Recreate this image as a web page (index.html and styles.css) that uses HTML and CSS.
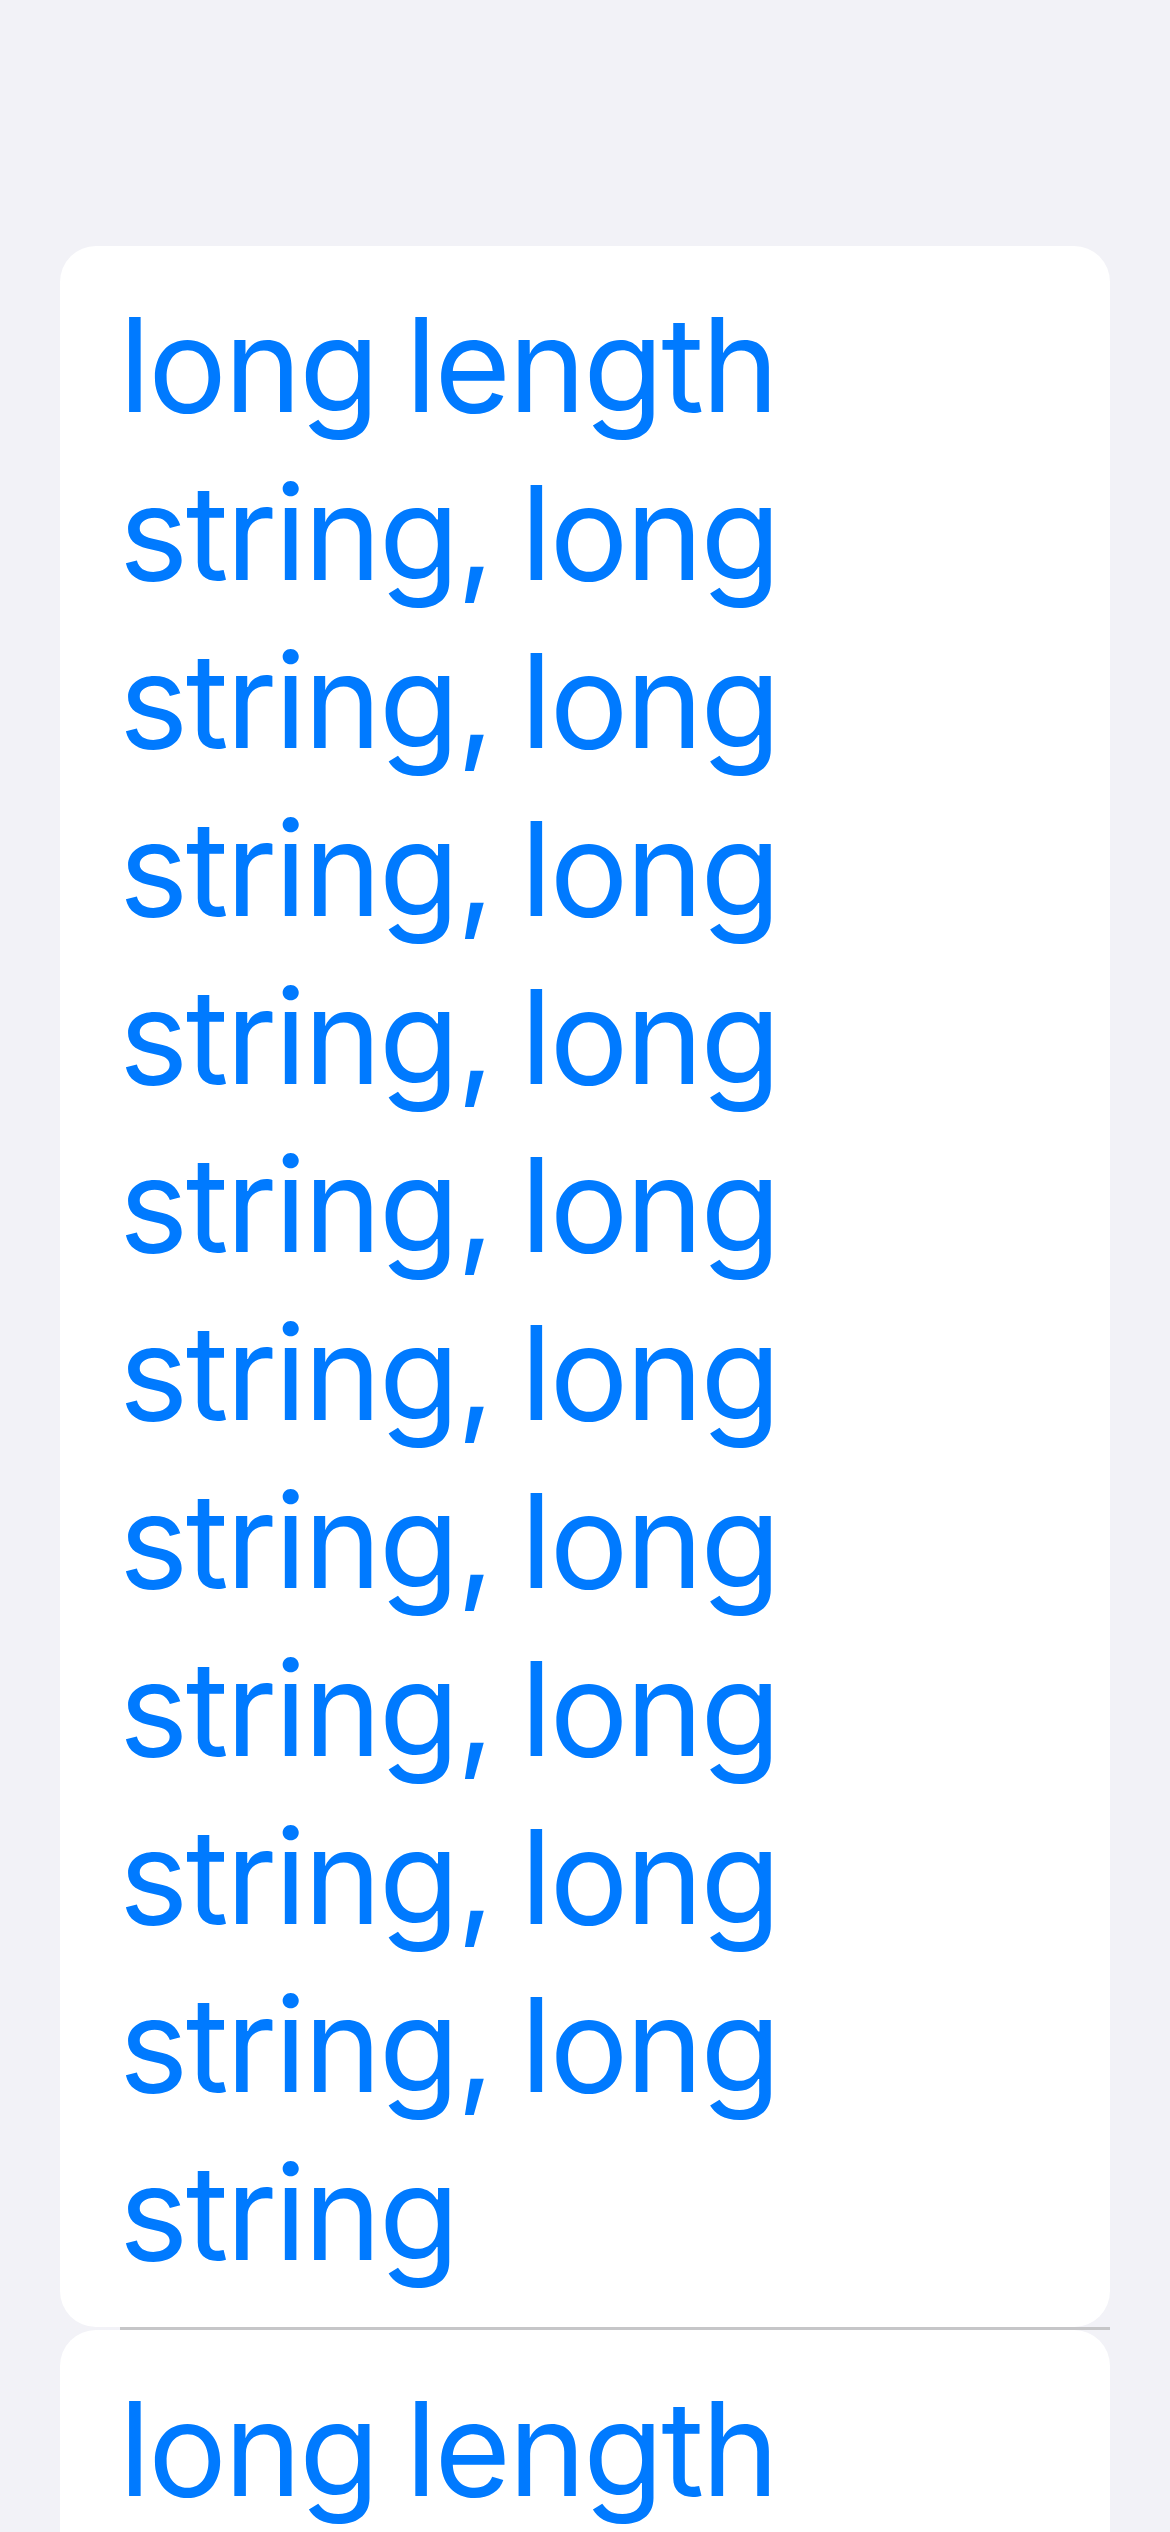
FILE: index.html
```html
<!DOCTYPE html>
<html>
<head>
<meta charset="utf-8">
<link rel="stylesheet" href="styles.css">
</head>
<body>
<main class="page">
  <section class="card card-first">
    <p class="cell-text">long length string, long string, long string, long string, long string, long string, long string, long string, long string, long string, long string</p>
  </section>
  <div class="separator"></div>
  <section class="card card-second">
    <p class="cell-text">long length string, long string, long string, long string</p>
  </section>
</main>
</body>
</html>
```
FILE: styles.css
```css
html, body {
  margin: 0;
  padding: 0;
  background: #f2f2f7;
  height: 2532px;
  overflow: hidden;
}
.page {
  padding-top: 246px;
}
.card {
  background: #ffffff;
  margin: 0 60px;
  border-radius: 36px;
  padding: 35px 60px 30px 59px;
}
.cell-text {
  margin: 0;
  font-family: Inter, "Noto Sans", sans-serif;
  font-size: 131px;
  line-height: 168px;
  color: #007aff;
  letter-spacing: -2.5px;
  word-spacing: -6px;
}
.separator {
  height: 3px;
  margin: 0 60px 0 120px;
  background: #c6c6c8;
}
```
